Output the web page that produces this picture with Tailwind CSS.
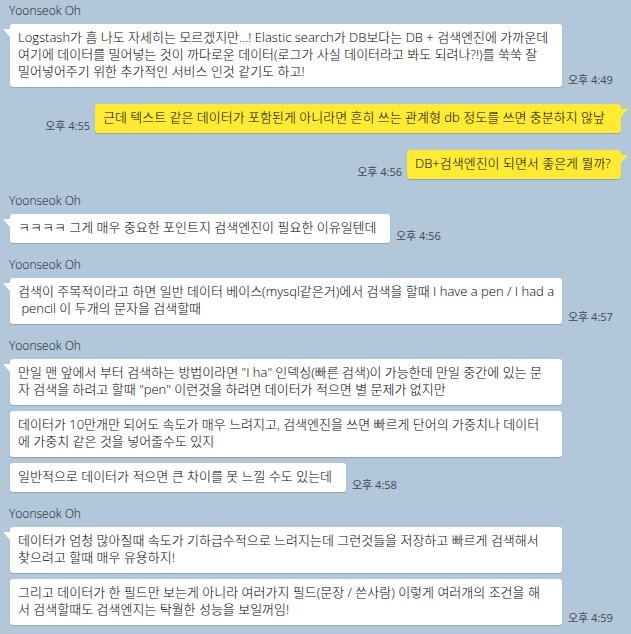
<!DOCTYPE html>
<html lang="ko">
<head>
<meta charset="utf-8">
<meta name="viewport" content="width=device-width, initial-scale=1">
<title>Yoonseok Oh</title>
<script src="https://cdn.jsdelivr.net/npm/@tailwindcss/browser@4"></script>
</head>
<body class="min-h-screen bg-[#b2c7da] font-['Open_Sans','Noto_Sans_CJK_KR',sans-serif] text-[13px] leading-[17px] font-light text-black">
<main class="flex flex-col gap-[17px] pt-[6px] pb-[9px] pl-[10px] pr-[10px]">

  <section>
    <h2 class="-ml-px h-[18px] text-[12px] leading-[10px] text-[#101820]">Yoonseok Oh</h2>
    <div class="flex items-end gap-[6px]">
      <p class="relative max-w-[552px] grow rounded-[3px] bg-white pl-2 pr-1 pt-[5px] pb-[7px] shadow-[0_1px_1px_#8fa3b5]">
        <svg class="absolute top-[5px] -left-[7px] h-[8px] w-[8px]" viewBox="0 0 8 8" fill="#fff" aria-hidden="true"><path d="M0 0H8V8H7Z"/></svg>
        Logstash가 흠 나도 자세히는 모르겠지만...! Elastic search가 DB보다는 DB + 검색엔진에 가까운데<br>여기에 데이터를 밀어넣는 것이 까다로운 데이터(로그가 사실 데이터라고 봐도 되려나?!)를 쑥쑥 잘<br>밀어넣어주기 위한 추가적인 서비스 인것 같기도 하고!</p>
      <time class="shrink-0 text-[11px] leading-[14px] font-normal text-[#3d4852]">오후 4:49</time>
    </div>
  </section>

  <section class="flex items-end justify-end gap-[5px]">
    <time class="shrink-0 text-[11px] leading-[14px] font-normal text-[#3d4852]">오후 4:55</time>
    <p class="relative w-[526px] rounded-[3px] bg-[#ffeb33] px-2 pt-[5px] pb-[7px] shadow-[0_1px_1px_#8fa3b5]">
      <svg class="absolute top-[5px] -right-[7px] h-[8px] w-[8px]" viewBox="0 0 8 8" fill="#ffeb33" aria-hidden="true"><path d="M8 0H0V8H1Z"/></svg>
      근데 텍스트 같은 데이터가 포함된게 아니라면 흔히 쓰는 관계형 db 정도를 쓰면 충분하지 않낲</p>
  </section>

  <section class="flex items-end justify-end gap-[5px]">
    <time class="shrink-0 text-[11px] leading-[14px] font-normal text-[#3d4852]">오후 4:56</time>
    <p class="relative w-[214px] rounded-[3px] bg-[#ffeb33] px-2 pt-[5px] pb-[7px] shadow-[0_1px_1px_#8fa3b5]">
      <svg class="absolute top-[5px] -right-[7px] h-[8px] w-[8px]" viewBox="0 0 8 8" fill="#ffeb33" aria-hidden="true"><path d="M8 0H0V8H1Z"/></svg>
      DB+검색엔진이 되면서 좋은게 뭘까?</p>
  </section>

  <section>
    <h2 class="-ml-px h-[18px] text-[12px] leading-[10px] text-[#101820]">Yoonseok Oh</h2>
    <div class="flex items-end gap-[6px]">
      <p class="relative w-[380px] rounded-[3px] bg-white px-2 pt-[5px] pb-[7px] shadow-[0_1px_1px_#8fa3b5]">
        <svg class="absolute top-[5px] -left-[7px] h-[8px] w-[8px]" viewBox="0 0 8 8" fill="#fff" aria-hidden="true"><path d="M0 0H8V8H7Z"/></svg>
        ㅋㅋㅋㅋ 그게 매우 중요한 포인트지 검색엔진이 필요한 이유일텐데</p>
      <time class="shrink-0 text-[11px] leading-[14px] font-normal text-[#3d4852]">오후 4:56</time>
    </div>
  </section>

  <section>
    <h2 class="-ml-px h-[18px] text-[12px] leading-[10px] text-[#101820]">Yoonseok Oh</h2>
    <div class="flex items-end gap-[6px]">
      <p class="relative max-w-[552px] grow rounded-[3px] bg-white pl-2 pr-1 pt-[5px] pb-[7px] shadow-[0_1px_1px_#8fa3b5]">
        <svg class="absolute top-[5px] -left-[7px] h-[8px] w-[8px]" viewBox="0 0 8 8" fill="#fff" aria-hidden="true"><path d="M0 0H8V8H7Z"/></svg>
        검색이 주목적이라고 하면 일반 데이터 베이스(mysql같은거)에서 검색을 할때 I have a pen / I had a<br>&nbsp;pencil 이 두개의 문자을 검색할때</p>
      <time class="shrink-0 text-[11px] leading-[14px] font-normal text-[#3d4852]">오후 4:57</time>
    </div>
  </section>

  <section>
    <h2 class="-ml-px h-[18px] text-[12px] leading-[10px] text-[#101820]">Yoonseok Oh</h2>
    <div class="flex flex-col gap-[6px]">
      <p class="relative max-w-[552px] rounded-[3px] bg-white pl-2 pr-1 pt-[5px] pb-[7px] shadow-[0_1px_1px_#8fa3b5]">
        <svg class="absolute top-[5px] -left-[7px] h-[8px] w-[8px]" viewBox="0 0 8 8" fill="#fff" aria-hidden="true"><path d="M0 0H8V8H7Z"/></svg>
        만일 맨 앞에서 부터 검색하는 방법이라면 "I ha" 인덱싱(빠른 검색)이 가능한데 만일 중간에 있는 문<br>자 검색을 하려고 할때 "pen" 이런것을 하려면 데이터가 적으면 별 문제가 없지만</p>
      <p class="max-w-[552px] rounded-[3px] bg-white pl-2 pr-1 pt-[5px] pb-[7px] shadow-[0_1px_1px_#8fa3b5]">데이터가 10만개만 되어도 속도가 매우 느려지고, 검색엔진을 쓰면 빠르게 단어의 가중치나 데이터<br>에 가중치 같은 것을 넣어줄수도 있지</p>
      <div class="flex items-end gap-[6px]">
        <p class="w-[336px] rounded-[3px] bg-white px-2 pt-[5px] pb-[7px] shadow-[0_1px_1px_#8fa3b5]">일반적으로 데이터가 적으면 큰 차이를 못 느낄 수도 있는데</p>
        <time class="shrink-0 text-[11px] leading-[14px] font-normal text-[#3d4852]">오후 4:58</time>
      </div>
    </div>
  </section>

  <section>
    <h2 class="-ml-px h-[18px] text-[12px] leading-[10px] text-[#101820]">Yoonseok Oh</h2>
    <div class="flex flex-col gap-[6px]">
      <p class="relative max-w-[552px] rounded-[3px] bg-white pl-2 pr-1 pt-[5px] pb-[7px] shadow-[0_1px_1px_#8fa3b5]">
        <svg class="absolute top-[5px] -left-[7px] h-[8px] w-[8px]" viewBox="0 0 8 8" fill="#fff" aria-hidden="true"><path d="M0 0H8V8H7Z"/></svg>
        데이터가 엄청 많아질때 속도가 기하급수적으로 느려지는데 그런것들을 저장하고 빠르게 검색해서<br>찾으려고 할때 매우 유용하지!</p>
      <div class="flex items-end gap-[6px]">
        <p class="max-w-[552px] grow rounded-[3px] bg-white pl-2 pr-1 pt-[5px] pb-[7px] shadow-[0_1px_1px_#8fa3b5]">그리고 데이터가 한 필드만 보는게 아니라 여러가지 필드(문장 / 쓴사람) 이렇게 여러개의 조건을 해<br>서 검색할때도 검색엔지는 탁월한 성능을 보일꺼임!</p>
        <time class="shrink-0 text-[11px] leading-[14px] font-normal text-[#3d4852]">오후 4:59</time>
      </div>
    </div>
  </section>

</main>
</body>
</html>
